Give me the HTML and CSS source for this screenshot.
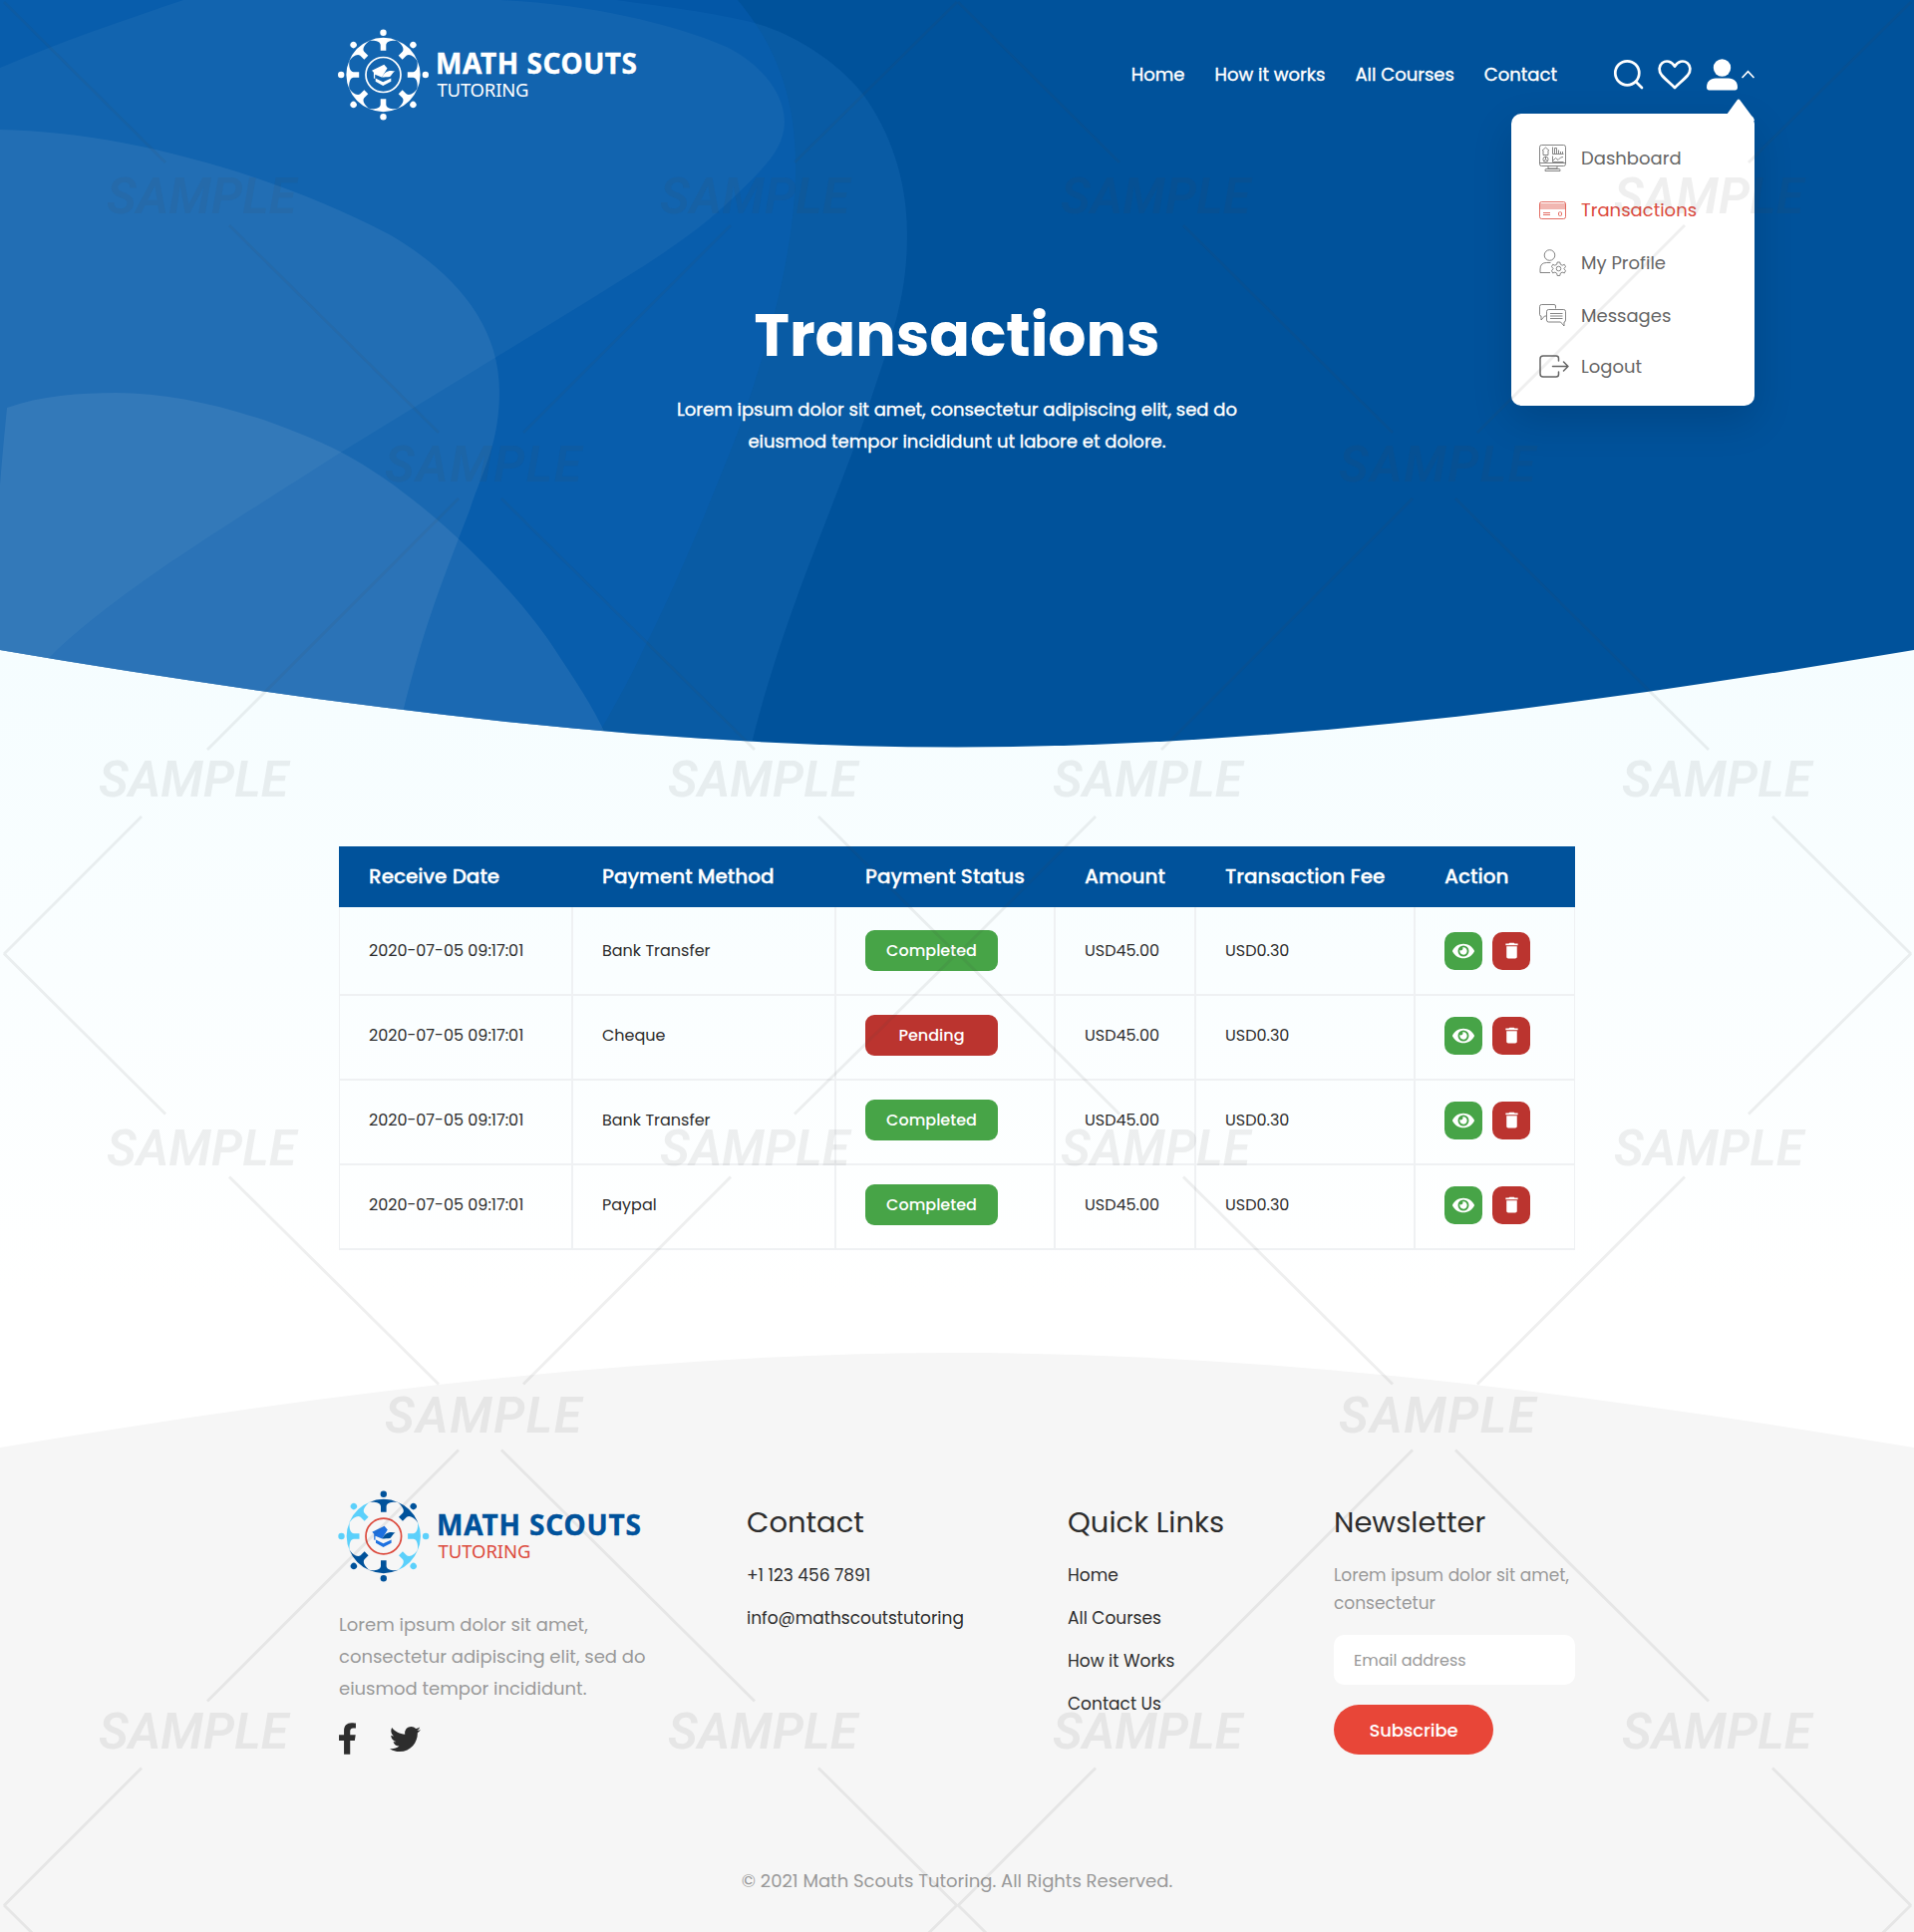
FILE: index.html
```html
<!DOCTYPE html>
<html lang="en">
<head>
<meta charset="utf-8">
<title>Transactions - Math Scouts Tutoring</title>
<link rel="stylesheet" href="styles.css">
</head>
<body>
<svg width="0" height="0" class="defs" aria-hidden="true">
  <defs>
    <g id="scout">
      <circle cx="0" cy="-42.3" r="3.2"/>
      <path d="M-15-33.8A37 37 0 0 1 15-33.8C10-35 3.200-34 2.800-30V-24.300H-2.800V-30C-3.200-34-10-35-15-33.800Z"/>
    </g>
    <g id="cap-left"><path d="M-11.5-4.3L.8-10.3 4-6.4-1.5 2.6-8.3-.3V4L-9.6 3.6V-2.2Z"/></g>
    <g id="cap-right"><path d="M-1.5 2.6C1-2.5 5-5.4 12-3.4 9.500-2.900 8 1.500 6.500 2 4 2.500 1 2.200-1.500 2.600Z"/></g>
    <g id="cap-base"><path d="M-7.800 3.400L-.3 7.300 7.800 3.400V6.800L-.3 11-7.800 6.800Z"/></g>
    <symbol id="eye" viewBox="0 0 576 512"><path d="M572.52 241.4C518.29 135.59 410.93 64 288 64S57.68 135.64 3.48 241.41a32.35 32.35 0 0 0 0 29.19C57.71 376.41 165.07 448 288 448s230.32-71.64 284.52-177.41a32.35 32.35 0 0 0 0-29.19zM288 400a144 144 0 1 1 144-144 143.93 143.93 0 0 1-144 144zm0-240a95.31 95.31 0 0 0-25.310 3.790 47.850 47.850 0 0 1-66.900 66.900A95.780 95.780 0 1 0 288 160z"/></symbol>
    <symbol id="trash" viewBox="0 0 24 24"><path d="M6 19c0 1.100.9 2 2 2h8c1.100 0 2-.9 2-2V7H6v12zM19 4h-3.500l-1-1h-5l-1 1H5v2h14V4z"/></symbol>
    <g id="sample-tile">
      <text x="107" y="214" textLength="190">SAMPLE</text>
      <text x="662" y="214" textLength="190">SAMPLE</text>
      <text x="386" y="482.500" textLength="197">SAMPLE</text>
      <text x="99" y="799" textLength="190">SAMPLE</text>
      <text x="670" y="799" textLength="190">SAMPLE</text>
      <path d="M4 2L166 163M230 226L440 434M960 2L797 163M733 226L525 434M460 500L208 752M503 500L757 752M142 819L4 957M821 819L960 957"/>
    </g>
  </defs>
</svg>

<div class="page">
  <section class="hero">
    <svg class="hero-bg" viewBox="0 0 1920 750" width="1920" height="750">
      <clipPath id="hero-clip"><path d="M0 0H1920V652C1600 706 1280 749.500 960 749.500S320 706 0 652Z"/></clipPath>
      <g clip-path="url(#hero-clip)">
        <rect width="1920" height="750" fill="#00529b"/>
        <path fill="#1a6cb5" fill-opacity=".33" d="M0 0H618C660 6 700 10 753 22C785 30 835 55 866 95C893 132 910 180 910 235C910 300 895 335 870 412C852 465 825 530 802 592C781 650 765 700 753 750H0Z"/>
        <path fill="#0a62be" fill-opacity=".35" d="M0 0H740C765 30 798 80 798 165C798 260 765 360 744 423C715 500 670 605 645 652C630 685 610 720 592 750H0Z"/>
        <path fill="#fff" fill-opacity=".045" d="M0 68C60 42 125 20 184 0H502C588 4 670 22 729 47C765 65 787 95 787 122C787 150 765 170 735 199C690 242 640 270 588 303L343 453C240 520 120 590 49 660L0 700Z"/>
        <path fill="#fff" fill-opacity=".072" d="M0 130C120 132 270 172 392 236C455 273 501 325 501 392C501 445 485 470 471 512C440 592 425 630 404 715L390 750H0Z"/>
        <path fill="#fff" fill-opacity=".08" d="M0 487C2 460 5 430 7 409C40 397 80 394 116 394C190 394 275 420 343 454C430 500 520 595 557 652C575 680 595 708 609 740V750H0Z"/>
      </g>
    </svg>

    <header class="header">
      <a class="logo">
        <svg width="310" height="94" viewBox="0 0 310 94" fill="#fff">
          <g transform="translate(44.500 47)">
            <use href="#scout"/><use href="#scout" transform="rotate(45)"/><use href="#scout" transform="rotate(90)"/><use href="#scout" transform="rotate(135)"/><use href="#scout" transform="rotate(180)"/><use href="#scout" transform="rotate(225)"/><use href="#scout" transform="rotate(270)"/><use href="#scout" transform="rotate(315)"/>
            <circle r="17.500" fill="none" stroke="#fff" stroke-width="1.700"/>
            <use href="#cap-left"/><use href="#cap-right"/><use href="#cap-base"/>
          </g>
          <text class="logo-name" stroke="#fff" x="97" y="45.500" textLength="202">MATH SCOUTS</text>
          <text class="logo-sub" x="98.500" y="68.500" textLength="92">TUTORING</text>
        </svg>
      </a>
      <div class="header-right">
        <nav class="nav"><a>Home</a><a>How it works</a><a>All Courses</a><a>Contact</a></nav>
        <div class="tools">
          <svg width="30" height="30" viewBox="0 0 30 30" fill="none" stroke="#fff" stroke-width="2.700" stroke-linecap="round"><circle cx="13.300" cy="13.300" r="12"/><path d="M22 22L28 28"/></svg>
          <svg class="heart" width="34" height="30" viewBox="0 0 34 30" fill="none" stroke="#fff" stroke-width="2.700" stroke-linejoin="round"><path d="M17 28C13 24 7.500 19.500 4 15.500C.5 11 1 6 4.300 3.200C8.500 0 14 1.500 17 6.500C20 1.500 25.500 0 29.700 3.200C33 6 33.500 11 30 15.500C26.500 19.500 21 24 17 28Z"/></svg>
          <svg class="user" width="31" height="32" viewBox="0 0 31 32" fill="#fff"><circle cx="15.500" cy="9" r="8.700"/><path d="M9 19.500H22C27.500 19.500 31 23 31 28.500C31 30.500 30 31.500 28.500 31.500H2.500C1 31.500 0 30.500 0 28.500C0 23 3.500 19.500 9 19.500Z"/></svg>
          <svg width="13" height="9" viewBox="0 0 13 9" fill="none" stroke="#fff" stroke-width="1.700" stroke-linecap="round"><path d="M1 7.500L6.500 1.700 12 7.500"/></svg>
        </div>
      </div>
      <div class="menu">
        <svg class="menu-arrow" width="28" height="22" viewBox="0 0 28 22" fill="#fff"><path d="M0 16L10.500 1.500Q12 -.5 13.500 1.500L25 17Q28 19 28 22H0Z"/></svg>
        <a><svg width="27" height="27" viewBox="0 0 27 27"><rect x=".5" y=".5" width="26" height="21" rx="2"/><path d="M.5 18.500H26.500M9 22V24H18V22M6 26.500V25.500Q6 24.500 7 24.500H20Q21 24.500 21 25.500V26.500ZM3 6L6.500 3 10 6M4 6V10.500H9V6M13.500 2.500V9.500H24.500M15.500 9V3.500H17.500V9M19.500 9V5.500M21.500 9V7M23.500 9V7M13.500 11.500V17.500H24.500M14 16L16.500 13.500 19 15.500 21.500 13 24 12.500"/><circle cx="6.500" cy="14.800" r="2.600"/><path d="M6.500 12V15L4.500 16.800M6.500 15L8.500 16.800"/></svg>Dashboard</a>
        <a class="active"><svg width="27" height="18" viewBox="0 0 27 18"><rect x=".5" y=".5" width="26" height="17" rx="2"/><path d="M.5 3H26.500M.5 5H26.500M.5 7H26.500M4 11.500H11M4 13.500H11"/><rect x="19.500" y="10.800" width="3" height="3.500" rx=".8"/></svg>Transactions</a>
        <a><svg width="27" height="27" viewBox="0 0 27 27"><circle cx="10.500" cy="6" r="5.300"/><path d="M11 23.500H1V20Q1 13.500 7.500 13.500H11.500"/><circle cx="19.500" cy="19.500" r="2.300"/><path d="M18.200 13H20.800L21.300 15.200 23.200 16.200 25.300 15.300 26.500 17.500 24.900 19.500 26.500 21.700 25.300 23.900 23.100 23.100 21.300 24.200 20.800 26.500H18.200L17.700 24.200 15.900 23.100 13.700 23.900 12.500 21.700 14.100 19.500 12.500 17.500 13.700 15.300 15.800 16.200 17.700 15.200Z"/></svg>My Profile</a>
        <a><svg width="27" height="23" viewBox="0 0 27 23"><path d="M16.500 4.500V2Q16.500.5 15 .5H2.500Q.5.500.5 2.500V10.500Q.5 12 2 12V16L5.500 12H7"/><path d="M9.500 5.500H24.500Q26.500 5.500 26.500 7.500V16Q26.500 18 25 18V22L21.500 18H9.500Q7.500 18 7.500 16V7.500Q7.500 5.500 9.500 5.500ZM11 9.500H23.500M11 12H23.500M11 14.500H23.500"/></svg>Messages</a>
        <a><svg width="30" height="23" viewBox="0 0 30 23" class="bold"><path d="M19.500 6V3.500Q19.500 1 17 1H4Q1 1 1 4V19Q1 22 4 22H17Q19.500 22 19.500 19.500V17M13.500 11.500H29M24.500 7L29 11.500 24.500 16"/></svg>Logout</a>
      </div>
    </header>

    <h1>Transactions</h1>
    <p class="lead">Lorem ipsum dolor sit amet, consectetur adipiscing elit, sed do<br>eiusmod tempor incididunt ut labore et dolore.</p>
  </section>

  <main class="main">
    <div class="table">
      <div class="row head"><span>Receive Date</span><span>Payment Method</span><span>Payment Status</span><span>Amount</span><span>Transaction Fee</span><span>Action</span></div>
      <div class="row first"><span>2020-07-05 09:17:01</span><span>Bank Transfer</span><span><b class="badge green">Completed</b></span><span>USD45.00</span><span>USD0.30</span><span class="actions"><button class="act green"><svg width="22" height="20"><use href="#eye"/></svg></button><button class="act red"><svg width="21" height="21"><use href="#trash"/></svg></button></span></div>
      <div class="row"><span>2020-07-05 09:17:01</span><span>Cheque</span><span><b class="badge red">Pending</b></span><span>USD45.00</span><span>USD0.30</span><span class="actions"><button class="act green"><svg width="22" height="20"><use href="#eye"/></svg></button><button class="act red"><svg width="21" height="21"><use href="#trash"/></svg></button></span></div>
      <div class="row"><span>2020-07-05 09:17:01</span><span>Bank Transfer</span><span><b class="badge green">Completed</b></span><span>USD45.00</span><span>USD0.30</span><span class="actions"><button class="act green"><svg width="22" height="20"><use href="#eye"/></svg></button><button class="act red"><svg width="21" height="21"><use href="#trash"/></svg></button></span></div>
      <div class="row"><span>2020-07-05 09:17:01</span><span>Paypal</span><span><b class="badge green">Completed</b></span><span>USD45.00</span><span>USD0.30</span><span class="actions"><button class="act green"><svg width="22" height="20"><use href="#eye"/></svg></button><button class="act red"><svg width="21" height="21"><use href="#trash"/></svg></button></span></div>
    </div>
  </main>

  <footer class="footer">
    <svg class="footer-curve" width="1920" height="96" viewBox="0 0 1920 96"><path fill="#f6f6f6" d="M0 96C320 43 640 1 960 1S1600 43 1920 96Z"/></svg>
    <div class="footer-body">
      <div class="columns">
        <div class="about">
          <svg class="footer-logo" width="310" height="94" viewBox="0 0 310 94">
            <g transform="translate(44.800 47)">
              <g fill="#00529b"><use href="#scout"/><use href="#scout" transform="rotate(45)"/><use href="#scout" transform="rotate(180)"/><use href="#scout" transform="rotate(225)"/></g>
              <g fill="#5bd0fb"><use href="#scout" transform="rotate(90)"/><use href="#scout" transform="rotate(135)"/><use href="#scout" transform="rotate(270)"/><use href="#scout" transform="rotate(315)"/></g>
              <circle r="17.800" fill="none" stroke="#dc4a3d" stroke-width="1.700"/>
              <use href="#cap-left" fill="#1d71e0"/><use href="#cap-right" fill="#00529b"/><use href="#cap-base" fill="#1d71e0"/>
            </g>
            <text class="logo-name" fill="#00529b" stroke="#00529b" x="98" y="45.500" textLength="205">MATH SCOUTS</text>
            <text class="logo-sub" fill="#dc4a3d" x="99.500" y="68.500" textLength="93">TUTORING</text>
          </svg>
          <p>Lorem ipsum dolor sit amet,<br>consectetur adipiscing elit, sed do<br>eiusmod tempor incididunt.</p>
          <div class="social">
            <svg width="17" height="32" viewBox="22 0 276 512"><path d="M279.140 288l14.220-92.660h-88.910v-60.130c0-25.350 12.420-50.060 52.240-50.060h40.420V6.260S260.430 0 225.360 0c-73.220 0-121.080 44.380-121.080 124.720v70.620H22.890V288h81.390v224h100.170V288z"/></svg>
            <svg width="31" height="31" viewBox="0 0 512 512"><path d="M459.370 151.716c.325 4.548.325 9.097.325 13.645 0 138.720-105.583 298.558-298.558 298.558-59.452 0-114.680-17.219-161.137-47.106 8.447.974 16.568 1.299 25.340 1.299 49.055 0 94.213-16.568 130.274-44.832-46.132-.975-84.792-31.188-98.112-72.772 6.498.974 12.995 1.624 19.818 1.624 9.421 0 18.843-1.300 27.614-3.573-48.081-9.747-84.143-51.980-84.143-102.985v-1.299c13.969 7.797 30.214 12.670 47.431 13.319-28.264-18.843-46.781-51.005-46.781-87.391 0-19.492 5.197-37.360 14.294-52.954 51.655 63.675 129.300 105.258 216.365 109.807-1.624-7.797-2.599-15.918-2.599-24.040 0-57.828 46.782-104.934 104.934-104.934 30.213 0 57.502 12.670 76.670 33.137 23.715-4.548 46.456-13.320 66.599-25.340-7.798 24.366-24.366 44.833-46.132 57.827 21.117-2.273 41.584-8.122 60.426-16.243-14.292 20.791-32.161 39.308-52.628 54.253z"/></svg>
          </div>
        </div>
        <div class="col"><h3>Contact</h3><a>+1 123 456 7891</a><a>info@mathscoutstutoring</a></div>
        <div class="col"><h3>Quick Links</h3><a>Home</a><a>All Courses</a><a>How it Works</a><a>Contact Us</a></div>
        <div class="col"><h3>Newsletter</h3><p>Lorem ipsum dolor sit amet,<br>consectetur</p><input type="text" placeholder="Email address"><button class="subscribe">Subscribe</button></div>
      </div>
      <p class="copyright">© 2021 Math Scouts Tutoring. All Rights Reserved.</p>
    </div>
  </footer>

  <svg class="watermark" width="1920" height="1938" viewBox="0 0 1920 1938">
    <use href="#sample-tile"/><use href="#sample-tile" x="957"/>
    <use href="#sample-tile" y="954.500"/><use href="#sample-tile" x="957" y="954.500"/>
    <use href="#sample-tile" y="1909"/><use href="#sample-tile" x="957" y="1909"/>
  </svg>
</div>
</body>
</html>
```
FILE: styles.css
```css
* { box-sizing: border-box; }
body {
  margin: 0;
  font-family: Poppins, Inter, sans-serif;
  font-size: 18px;
  color: #2d2d2d;
}
h1, h3, p { margin: 0; }
button { font: inherit; border: 0; padding: 0; color: #fff; }
svg { display: block; flex: none; overflow: visible; }
.defs { position: absolute; }

.page {
  position: relative;
  width: 1920px;
  height: 1938px;
  overflow: hidden;
  background: linear-gradient(#f5fdff 652px, #fff 1300px);
}

/* Hero */
.hero { position: relative; height: 749px; color: #fff; text-align: center; }
.hero-bg { position: absolute; top: 0; left: 0; overflow: hidden; }
.header {
  position: relative;
  height: 149px;
  padding: 0 160px 0 340px;
  display: flex;
  align-items: center;
  justify-content: space-between;
}
.logo-name { font: 700 28px "Noto Sans", sans-serif; stroke-width: .4; }
.logo-sub { font: 400 18.500px "Noto Sans", sans-serif; }
.header-right { display: flex; align-items: center; gap: 57px; }
.nav { display: flex; gap: 30px; -webkit-text-stroke: .35px; }
.tools { display: flex; align-items: center; }
.heart { margin: 0 15px 0 14px; }
.user { margin-right: 4px; }

.menu {
  position: absolute;
  top: 114px;
  right: 160px;
  width: 244px;
  height: 293px;
  padding: 18px 28px;
  display: grid;
  grid-template-rows: 52px 53px 53px 52px 51px;
  align-content: start;
  background: #fff;
  border-radius: 10px;
  box-shadow: 0 14px 40px rgba(0, 0, 0, .14);
  color: #666;
}
.menu-arrow { position: absolute; top: -15px; right: 0; }
.menu a { display: grid; grid-template-columns: 42px auto; align-items: center; text-align: left; }
.menu a svg { fill: none; stroke: currentColor; stroke-width: .8; }
.menu a svg.bold { stroke-width: 1.500px; stroke-linecap: round; stroke-linejoin: round; }
.menu .active { color: #dc4a3d; }

.hero h1 {
  position: relative;
  margin-top: 151px;
  font-size: 60px;
  font-weight: 700;
  line-height: 72px;
}
.lead { position: relative; margin-top: 23px; line-height: 32px; -webkit-text-stroke: .35px; }

/* Transactions table */
.main { padding: 100px 340px 102px; }
.row {
  display: grid;
  grid-template-columns: 233px 264px 220px 141px 220px 162px;
  height: 85px;
  font-size: 16px;
  border-bottom: 2px solid #eff1f3;
}
.row span {
  display: flex;
  align-items: center;
  padding: 0 0 4px 29px;
  border-left: 2px solid #eff1f3;
}
.row span:first-child { border-left-width: 1px; }
.row span:last-child { border-right: 1px solid #eff1f3; }
.row.first { height: 89px; }
.row.first span { padding-bottom: 0; }
.row.head {
  height: 61px;
  border: 0;
  background: #00529b;
  color: #fff;
  font-size: 20px;
  font-weight: 500;
  -webkit-text-stroke: .3px;
}
.row.head span { border-color: transparent; padding-bottom: 2px; }
.badge {
  width: 133px;
  height: 41px;
  border-radius: 9px;
  color: #fff;
  font-weight: 500;
  line-height: 41px;
  text-align: center;
}
.green { background: #47a447; }
.red { background: #bb342f; }
.actions { gap: 10px; }
.act {
  width: 38px;
  height: 38px;
  border-radius: 10px;
  display: flex;
  align-items: center;
  justify-content: center;
}
.act svg { fill: #fff; }

/* Footer */
.footer-body { height: 486px; padding: 42px 340px 0; background: #f6f6f6; }
.columns { display: grid; grid-template-columns: 409px 322px 267px 242px; height: 379px; }
.about p { margin-top: 26px; line-height: 32px; color: #999; }
.social { display: flex; align-items: center; gap: 34px; margin-top: 18px; fill: #2d2d2d; }
.col { display: flex; flex-direction: column; align-items: flex-start; padding-top: 15px; font-size: 17px; }
.col h3 { margin-bottom: 21px; font-size: 29px; font-weight: 400; line-height: 36px; }
.col a { height: 43px; line-height: 28px; }
.col p { color: #999; line-height: 28px; }
.col input {
  width: 242px;
  height: 50px;
  margin: 18px 0 20px;
  padding: 0 20px;
  border: 0;
  border-radius: 10px;
  background: #fff;
  font: 16px Poppins, Inter, sans-serif;
}
.col input::placeholder { color: #999; }
.subscribe { width: 160px; height: 50px; border-radius: 25px; background: #e84638; font-size: 18px; font-weight: 500; letter-spacing: -.1px; }
.copyright { color: #999; line-height: 27px; text-align: center; }

.watermark {
  position: absolute;
  top: 0;
  left: 0;
  pointer-events: none;
  opacity: .09;
  font: italic 600 50px Roboto, sans-serif;
  stroke-width: 2.800px;
}
.watermark use { fill: #444; }
#sample-tile path { fill: none; stroke: #444; }
```
